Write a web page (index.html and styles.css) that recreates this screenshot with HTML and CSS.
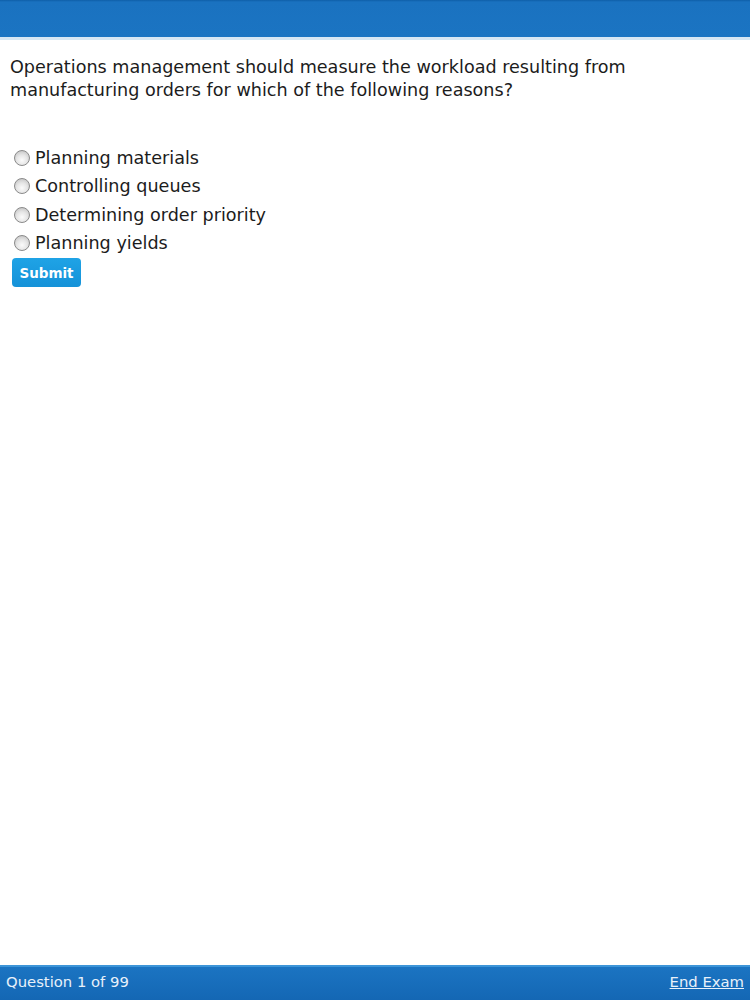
FILE: index.html
```html
<!DOCTYPE html>
<html>
<head>
<meta charset="utf-8">
<link rel="stylesheet" href="styles.css">
</head>
<body>
<div class="page">
  <header class="topbar"></header>
  <main class="content">
    <p class="question">Operations management should measure the workload resulting from manufacturing orders for which of the following reasons?</p>
    <ul class="options">
      <li class="option"><span class="radio"></span><span>Planning materials</span></li>
      <li class="option"><span class="radio"></span><span>Controlling queues</span></li>
      <li class="option"><span class="radio"></span><span>Determining order priority</span></li>
      <li class="option"><span class="radio"></span><span>Planning yields</span></li>
    </ul>
    <button class="submit">Submit</button>
  </main>
  <footer class="bottombar">
    <span class="count">Question 1 of 99</span>
    <a class="end" href="#">End Exam</a>
  </footer>
</div>
</body>
</html>
```
FILE: styles.css
```css
html, body {
  margin: 0;
  padding: 0;
  height: 100%;
  background: #ffffff;
  font-family: "DejaVu Sans", Verdana, sans-serif;
}
.page {
  display: flex;
  flex-direction: column;
  height: 1000px;
}
.topbar {
  height: 37px;
  background: linear-gradient(#0f5fa8 0, #1a72c0 2px, #1b74c2 100%);
  border-bottom: 3px solid #d6e6f3;
  flex: none;
}
.content {
  flex: 1;
  padding: 16px 10px 0 10px;
}
.question {
  margin: 0;
  font-size: 17.6px;
  line-height: 23px;
  color: #1c1c1c;
  width: 660px;
}
.options {
  list-style: none;
  margin: 42px 0 0 0;
  padding: 0;
}
.option {
  display: flex;
  align-items: center;
  height: 28.3px;
  font-size: 17.6px;
  color: #1c1c1c;
}
.radio {
  width: 14px;
  height: 14px;
  border-radius: 50%;
  border: 1px solid #8a8a8a;
  background: radial-gradient(circle at 50% 65%, #fbfbfb 0, #e6e6e6 45%, #b9b9b9 100%);
  margin: 0 5px 0 4px;
  flex: none;
}
.submit {
  margin: 1px 0 0 2px;
  width: 69px;
  height: 29px;
  border: none;
  border-radius: 4px;
  background: linear-gradient(#1fa3e6, #1592d8);
  color: #ffffff;
  font-family: "DejaVu Sans", Verdana, sans-serif;
  font-weight: bold;
  font-size: 13.5px;
  padding: 0;
}
.bottombar {
  flex: none;
  height: 33px;
  box-sizing: content-box;
  border-top: 2px solid #3d95d8;
  background: linear-gradient(#1b74c2, #1467b4);
  display: flex;
  align-items: center;
  justify-content: space-between;
  padding: 0 6px 0 6px;
  font-size: 14.8px;
  color: #e8f1fa;
}
.count, .end {
  margin-bottom: 5px;
}
.end {
  color: #e8f1fa;
  text-decoration: underline;
}
```
